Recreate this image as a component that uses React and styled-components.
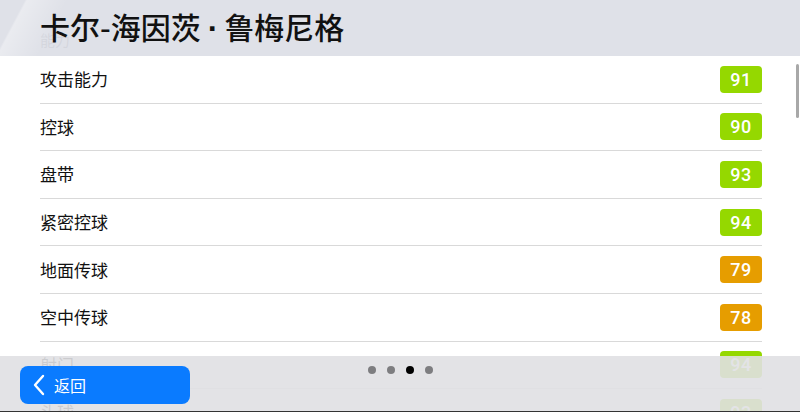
import React from 'react'
import styled, { createGlobalStyle } from 'styled-components'

const GlobalStyle = createGlobalStyle`
  html, body {
    margin: 0;
    padding: 0;
    background: #ffffff;
  }
  body {
    font-family: "Noto Sans CJK SC", "Noto Sans", sans-serif;
  }
`

const STATS = [
  { name: '攻击能力', value: 91 },
  { name: '控球', value: 90 },
  { name: '盘带', value: 93 },
  { name: '紧密控球', value: 94 },
  { name: '地面传球', value: 79 },
  { name: '空中传球', value: 78 },
  { name: '射门', value: 94 },
  { name: '头球', value: 93 },
  { name: '进攻意识', value: 92 },
]

const Screen = styled.div`
  position: relative;
  width: 800px;
  height: 412px;
  overflow: hidden;
  background: #ffffff;
`

const List = styled.div`
  display: flex;
  flex-direction: column;
`

const SectionTitle = styled.div`
  height: 56px;
  box-sizing: border-box;
  display: flex;
  align-items: flex-end;
  padding: 0 0 6px 40px;
  font-size: 15px;
  line-height: 20px;
  color: #8a8a90;
`

const Row = styled.div`
  height: 47.6px;
  box-sizing: border-box;
  margin-left: 40px;
  margin-right: 38px;
  display: flex;
  align-items: center;
  justify-content: space-between;
  border-bottom: 1px solid #d9d9d9;
`

const RowLabel = styled.span`
  font-size: 17px;
  color: #111111;
  line-height: 24px;
`

const Badge = styled.span`
  width: 42px;
  height: 27px;
  border-radius: 4px;
  display: flex;
  align-items: center;
  justify-content: center;
  background: ${p => (p.$value >= 80 ? '#95d800' : '#e69d00')};
  color: #ffffff;
  font-family: Roboto, "DejaVu Sans", sans-serif;
  font-weight: 500;
  font-size: 18px;
  letter-spacing: 0.5px;
`

const Header = styled.div`
  position: absolute;
  top: 0;
  left: 0;
  right: 0;
  height: 56px;
  box-sizing: border-box;
  padding-left: 40px;
  display: flex;
  align-items: center;
  background:
    linear-gradient(118deg, rgba(255,255,255,0) 0px, rgba(255,255,255,0) 22px, rgba(255,255,255,0.35) 24px, rgba(255,255,255,0) 60px),
    rgba(219, 222, 230, 0.9);
`

const Title = styled.h1`
  margin: 0;
  font-size: 30px;
  font-weight: 500;
  line-height: 40px;
  color: #111111;
  padding-bottom: 3px;
`

const MiddleDot = styled.span`
  font-family: "Liberation Sans", sans-serif;
  font-weight: 700;
  font-size: 32px;
  margin: 0 6px 0 7px;
`

const Scrollbar = styled.div`
  position: absolute;
  top: 64px;
  right: 1px;
  width: 3px;
  height: 54px;
  border-radius: 2px;
  background: #a8a8a8;
`

const Footer = styled.div`
  position: absolute;
  left: 0;
  right: 0;
  bottom: 0;
  height: 56px;
  box-sizing: border-box;
  padding: 10px 20px 0;
  background: rgba(224, 224, 227, 0.9);
  border-bottom: 1px solid #333333;
`

const BackButton = styled.button`
  width: 170px;
  height: 38px;
  border: none;
  border-radius: 8px;
  background: #0a7bff;
  color: #ffffff;
  display: flex;
  align-items: center;
  gap: 9px;
  padding: 0 0 0 13px;
  font-family: inherit;
  font-size: 16px;
  cursor: pointer;

  svg {
    width: 12px;
    height: 22px;
  }
`

const Dots = styled.div`
  position: absolute;
  top: 10px;
  left: 0;
  right: 0;
  display: flex;
  justify-content: center;
  gap: 11px;
  pointer-events: none;
`

const Dot = styled.span`
  width: 8px;
  height: 8px;
  border-radius: 50%;
  background: ${p => (p.$active ? '#000000' : '#7d7d80')};
`

const ChevronLeft = () => (
  <svg viewBox="0 0 12 22" fill="none">
    <path d="M10 2 L2 11 L10 20" stroke="#ffffff" strokeWidth="2.4" strokeLinecap="round" strokeLinejoin="round" />
  </svg>
)

export default function App() {
  return (
    <>
      <GlobalStyle />
      <Screen>
        <List>
          <SectionTitle>能力</SectionTitle>
          {STATS.map(s => (
            <Row key={s.name}>
              <RowLabel>{s.name}</RowLabel>
              <Badge $value={s.value}>{s.value}</Badge>
            </Row>
          ))}
        </List>
        <Header>
          <Title>
            卡尔-海因茨<MiddleDot>·</MiddleDot>鲁梅尼格
          </Title>
        </Header>
        <Scrollbar />
        <Footer>
          <BackButton>
            <ChevronLeft />
            返回
          </BackButton>
          <Dots>
            <Dot />
            <Dot />
            <Dot $active />
            <Dot />
          </Dots>
        </Footer>
      </Screen>
    </>
  )
}
